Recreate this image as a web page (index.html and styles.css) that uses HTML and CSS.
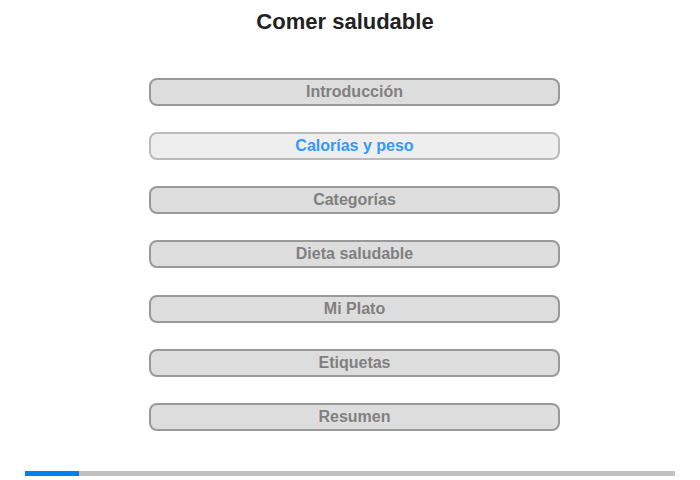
FILE: index.html
```html
<!doctype html>
<html>
<head>
<meta charset="utf-8">
<link rel="stylesheet" href="styles.css">
</head>
<body>
<h1 class="title">Comer saludable</h1>

<ul class="menu">
	<li>Introducción</li>
	<li class="cur">Calorías y peso</li>
	<li>Categorías</li>
	<li>Dieta saludable</li>
	<li class="step">Mi Plato</li>
	<li>Etiquetas</li>
	<li>Resumen</li>
</ul>

<div class="progress"><div class="bar" style="width:54px"></div></div>
</body>
</html>
```

FILE: styles.css
```css
*{
	margin:0; padding:0; list-style:none; box-sizing:border-box;
}
body{
	width:700px; height:480px; background:#fff;
	font-family:"Liberation Sans", Arial, sans-serif;
}
.title{
	padding:8px 10px 0 0; height:78px;
	font-size:22px; line-height:28px; font-weight:bold;
	color:#222; text-align:center;
}
.menu{
	width:411px; margin:0 0 0 149px;
	display:flex; flex-direction:column; gap:26px;
}
	.menu li{
		height:28px; border:2px solid #999; border-radius:8px;
		background:#ddd; color:#808080;
		font-size:16px; font-weight:bold; line-height:24px; text-align:center;
	}
	.menu li.step{
		margin-top:1px;
	}
	.menu li.cur{
		background:#eee; border-color:#bbb; color:#3399ff;
	}
.progress{
	margin:40px 25px 0; height:5px; background:#c0c0c0;
}
	.progress .bar{
		height:5px; background:#0080f0;
	}
```
